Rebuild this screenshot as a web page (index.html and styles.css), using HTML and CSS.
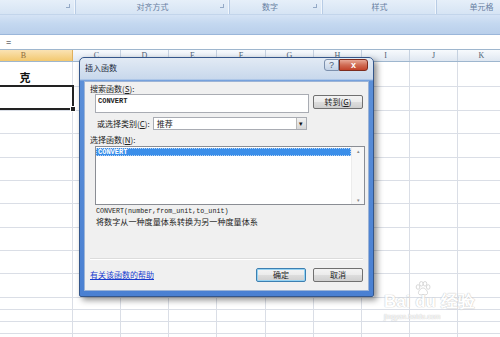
FILE: index.html
```html
<!DOCTYPE html>
<html lang="zh">
<head>
    <meta charset="UTF-8">
    <title>插入函数</title>
    <link rel="stylesheet" href="styles.css">
</head>
<body>
    <!-- 功能区分组标题 -->
    <div class="ribbon">
        <div class="group g1"><span class="launcher"></span></div>
        <div class="group g2">对齐方式<span class="launcher"></span></div>
        <div class="group g3">数字<span class="launcher"></span></div>
        <div class="group g4">样式</div>
        <div class="group g5">单元格</div>
    </div>
    <div class="band"></div>
    <div class="formula">=</div>

    <!-- 工作表 -->
    <div class="heads">
        <div class="head col-b">B</div>
        <div class="head">C</div>
        <div class="head">D</div>
        <div class="head">E</div>
        <div class="head w49">F</div>
        <div class="head">G</div>
        <div class="head">H</div>
        <div class="head">I</div>
        <div class="head">J</div>
        <div class="head">K</div>
    </div>
    <div class="rows">
        <div class="row h25"><div class="cell-b">克</div></div>
        <div class="row h24"><div class="selected"><span class="handle"></span></div></div>
        <div class="row h23"></div>
        <div class="row h24"></div>
        <div class="row h23"></div>
        <div class="row h23"></div>
        <div class="row h24"></div>
        <div class="row h23"></div>
        <div class="row h23"></div>
        <div class="row h24"></div>
        <div class="row h12"></div>
        <div class="row h12"></div>
        <div class="row h12"></div>
        <div class="row h12"></div>
    </div>

    <!-- 插入函数 对话框 -->
    <div class="dialog">
        <div class="title">插入函数</div>
        <div class="title-btn help">?</div>
        <div class="title-btn close">x</div>
        <div class="client">
            <div class="label">搜索函数(<u>S</u>):</div>
            <div class="search-row">
                <div class="input">CONVERT</div>
                <div class="button goto">转到(<u>G</u>)</div>
            </div>
            <div class="category-row">
                <div class="label">或选择类别(<u>C</u>):</div>
                <div class="select">推荐<span class="drop">▾</span></div>
            </div>
            <div class="label pick">选择函数(<u>N</u>):</div>
            <div class="listbox">
                <div class="items">
                    <div class="item active">CONVERT</div>
                </div>
                <div class="scroll"><span>▴</span><span>▾</span></div>
            </div>
            <div class="signature">CONVERT(number,from_unit,to_unit)</div>
            <div class="desc">将数字从一种度量体系转换为另一种度量体系</div>
            <div class="footer">
                <a class="help-link" href="#">有关该函数的帮助</a>
                <div class="button ok">确定</div>
                <div class="button">取消</div>
            </div>
        </div>
    </div>

    <!-- 水印 -->
    <div class="watermark">
        <svg class="paw" width="16" height="15" viewBox="0 0 16 15">
            <g fill="#fff" stroke="#c4c4c4" stroke-width="0.8">
                <ellipse cx="3" cy="6" rx="1.8" ry="2.3"/>
                <ellipse cx="6.3" cy="2.8" rx="1.8" ry="2.3"/>
                <ellipse cx="10" cy="2.8" rx="1.8" ry="2.3"/>
                <ellipse cx="13.2" cy="6" rx="1.8" ry="2.3"/>
                <path d="M8 7c-2.5 0-5 3.5-4.5 5.5.4 1.5 2.5 1.5 4.5 1 2 .5 4.1.5 4.5-1C13 10.5 10.5 7 8 7z"/>
            </g>
        </svg>
        <div class="mark">Bai du 经验</div>
        <div class="site">jingyan.baidu.com</div>
    </div>
</body>
</html>
```

FILE: styles.css
```css
body {
    margin: 0;
    width: 500px;
    height: 337px;
    overflow: hidden;
    background: #fff;
    font-family: "Noto Sans CJK SC", sans-serif;
    position: relative;
}

/* 功能区 */
.ribbon {
    display: flex;
    height: 14px;
    background: linear-gradient(#e6eff9, #d6e4f4);
    border-bottom: 1px solid #c3d5eb;
    overflow: hidden;
}

.group {
    flex: none;
    position: relative;
    box-sizing: border-box;
    border-right: 1px solid #b8cce5;
    box-shadow: inset -1px 0 0 #f1f6fc;
    font-size: 8px;
    line-height: 14px;
    text-align: center;
    color: #6880a2;
}

.g1 { width: 76px; }
.g2 { width: 154px; }
.g3 { width: 93px; padding-right: 12px; }
.g4 { width: 114px; }
.g5 { width: 90px; }

.launcher {
    position: absolute;
    right: 5px;
    top: 4px;
    width: 3px;
    height: 3px;
    border-right: 1px solid #94a9c6;
    border-bottom: 1px solid #94a9c6;
}

.band {
    height: 19px;
    background: linear-gradient(#d5e3f5, #c4d8f0 45%, #b9cfeb);
    border-bottom: 1px solid #9ab6da;
}

.formula {
    height: 14px;
    padding-left: 6px;
    font-family: "Liberation Sans", sans-serif;
    font-size: 9px;
    line-height: 14px;
    color: #222;
    border-bottom: 1px solid #9eb6ce;
}

/* 列标题 */
.heads {
    display: flex;
    height: 12px;
    box-sizing: border-box;
    border-bottom: 1px solid #9eb6ce;
}

.head {
    flex: none;
    width: 48px;
    box-sizing: border-box;
    border-right: 1px solid #c5d1e0;
    background: linear-gradient(#f7fafd, #dfe7f1);
    font-family: "Liberation Serif", serif;
    font-size: 8px;
    line-height: 11px;
    text-align: center;
    color: #4e5f74;
}

.head.w49 { width: 49px; }

.head.col-b {
    width: 73px;
    padding-right: 25px;
    background: linear-gradient(#fae3b4, #f3c86f);
    border-right-color: #e0b05c;
    color: #8c6a3a;
}

/* 单元格 */
.rows {
    background-image:
        linear-gradient(#dadee6, #dadee6), linear-gradient(#dadee6, #dadee6),
        linear-gradient(#dadee6, #dadee6), linear-gradient(#dadee6, #dadee6),
        linear-gradient(#dadee6, #dadee6), linear-gradient(#dadee6, #dadee6),
        linear-gradient(#dadee6, #dadee6), linear-gradient(#dadee6, #dadee6),
        linear-gradient(#dadee6, #dadee6);
    background-size: 1px 100%;
    background-repeat: no-repeat;
    background-position: 72px 0, 120px 0, 168px 0, 216px 0, 265px 0, 313px 0, 361px 0, 409px 0, 457px 0;
}

.row {
    position: relative;
    box-sizing: border-box;
    border-bottom: 1px solid #dadee6;
}

.h25 { height: 25px; }
.h24 { height: 24px; }
.h23 { height: 23px; }
.h12 { height: 12px; }

.cell-b {
    width: 50px;
    padding-top: 8px;
    text-align: center;
    font-size: 11px;
    font-weight: bold;
    line-height: 14px;
    color: #111;
}

.selected {
    position: absolute;
    left: -4px;
    top: -2px;
    width: 74px;
    height: 21px;
    border: 2px solid #222;
}

.handle {
    position: absolute;
    right: -4px;
    bottom: -4px;
    width: 4px;
    height: 4px;
    background: #222;
    border: 1px solid #fff;
}

/* 对话框 */
.dialog {
    position: absolute;
    left: 79px;
    top: 57px;
    width: 295px;
    height: 240px;
    box-sizing: border-box;
    padding: 23px 4px 5px 4px;
    border: 1px solid #34568a;
    border-radius: 5px 5px 2px 2px;
    background: linear-gradient(#e2eaf4 0, #c8d8ec 21px, #5b8fd8 23px, #4a80d2 100%);
    box-shadow: 3px 3px 6px rgba(0, 0, 0, 0.45);
}

.title {
    position: absolute;
    left: 5px;
    top: 4px;
    font-size: 8px;
    line-height: 12px;
    color: #1d2b3c;
}

.title-btn {
    position: absolute;
    top: 1px;
    height: 12px;
    box-sizing: border-box;
    font-family: "Liberation Sans", sans-serif;
    font-size: 9px;
    line-height: 11px;
    text-align: center;
}

.title-btn.help {
    left: 244px;
    width: 15px;
    border: 1px solid #7c90ad;
    border-radius: 3px 0 0 3px;
    background: linear-gradient(#e9eff7, #c3d2e6);
    color: #4b5d77;
}

.title-btn.close {
    left: 259px;
    width: 29px;
    border: 1px solid #7d2c1e;
    border-radius: 0 3px 3px 0;
    background: linear-gradient(#e8a896, #d06c54 50%, #c2432a);
    color: #fff;
    font-weight: bold;
}

.client {
    height: 100%;
    box-sizing: border-box;
    padding: 2px 5px 0 5px;
    background: #f0f0f0;
    border: 1px solid #9db4d6;
    display: flex;
    flex-direction: column;
    font-size: 8px;
    color: #222;
}

.label {
    line-height: 10px;
    white-space: nowrap;
}

.search-row {
    display: flex;
    align-items: flex-start;
    margin-top: 0;
    margin-left: 5px;
}

.input {
    width: 214px;
    height: 19px;
    box-sizing: border-box;
    padding: 2px 2px;
    background: #fff;
    border: 1px solid #a9acb3;
    font-family: "Liberation Mono", monospace;
    font-size: 7px;
    font-weight: bold;
    line-height: 9px;
}

.button {
    width: 50px;
    height: 14px;
    box-sizing: border-box;
    border: 1px solid #707070;
    border-radius: 2px;
    background: linear-gradient(#f3f3f3, #ebebeb 50%, #dddddd 51%, #cfcfcf);
    text-align: center;
    line-height: 12px;
    white-space: nowrap;
}

.goto {
    margin-left: 4px;
    margin-top: 1px;
}

.category-row {
    display: flex;
    align-items: center;
    margin-top: 4px;
    margin-left: 7px;
}

.select {
    position: relative;
    width: 154px;
    height: 13px;
    box-sizing: border-box;
    margin-left: 3px;
    padding-left: 3px;
    background: #fff;
    border: 1px solid #a9acb3;
    line-height: 11px;
}

.drop {
    position: absolute;
    right: 0;
    top: 0;
    width: 9px;
    height: 11px;
    border-left: 1px solid #b8b8b8;
    background: linear-gradient(#f2f2f2, #d6d6d6);
    font-size: 7px;
    text-align: center;
    line-height: 11px;
    color: #111;
}

.pick {
    margin-top: 5px;
}

.listbox {
    display: flex;
    width: 270px;
    height: 59px;
    box-sizing: border-box;
    margin-top: 1px;
    margin-left: 5px;
    background: #fff;
    border: 1px solid #8a8d94;
}

.items {
    flex: 1;
    padding-top: 1px;
}

.item {
    height: 8px;
    padding-left: 2px;
    font-family: "Liberation Mono", monospace;
    font-size: 7px;
    font-weight: bold;
    line-height: 8px;
}

.item.active {
    background: #3b8ee9;
    color: #fff;
    outline: 1px dotted #b7d4f5;
    outline-offset: -1px;
}

.scroll {
    width: 12px;
    display: flex;
    flex-direction: column;
    justify-content: space-between;
    background: #f7f7f7;
    border-left: 1px solid #ececec;
    font-size: 5px;
    line-height: 8px;
    text-align: center;
    color: #888;
}

.signature {
    margin-top: 2px;
    margin-left: 6px;
    font-family: "Liberation Mono", monospace;
    font-size: 6.7px;
    line-height: 9px;
}

.desc {
    margin-left: 6px;
    font-size: 8.1px;
    line-height: 11px;
    letter-spacing: 0;
}

.footer {
    margin-top: auto;
    height: 31px;
    display: flex;
    align-items: center;
    gap: 7px;
    border-top: 1px solid #dcdcdc;
    box-shadow: inset 0 1px 0 #fff;
}

.help-link {
    margin-right: auto;
    color: #1a3ccf;
    text-decoration: underline;
}

.button.ok {
    border-color: #3c7fb1;
    box-shadow: inset 0 0 0 1px #96d3f3;
}

/* 水印 */
.watermark {
    position: absolute;
    left: 384px;
    top: 281px;
    font-family: "Liberation Sans", sans-serif;
    color: #fff;
    text-shadow: 0 0 1px #b9b9b9, 0 0 1px #b9b9b9;
    opacity: 0.8;
}

.paw {
    display: block;
    margin-left: 31px;
}

.mark {
    margin-top: -4px;
    font-size: 17px;
    font-weight: bold;
    line-height: 20px;
    white-space: nowrap;
}

.site {
    font-size: 7px;
    line-height: 10px;
}
```
